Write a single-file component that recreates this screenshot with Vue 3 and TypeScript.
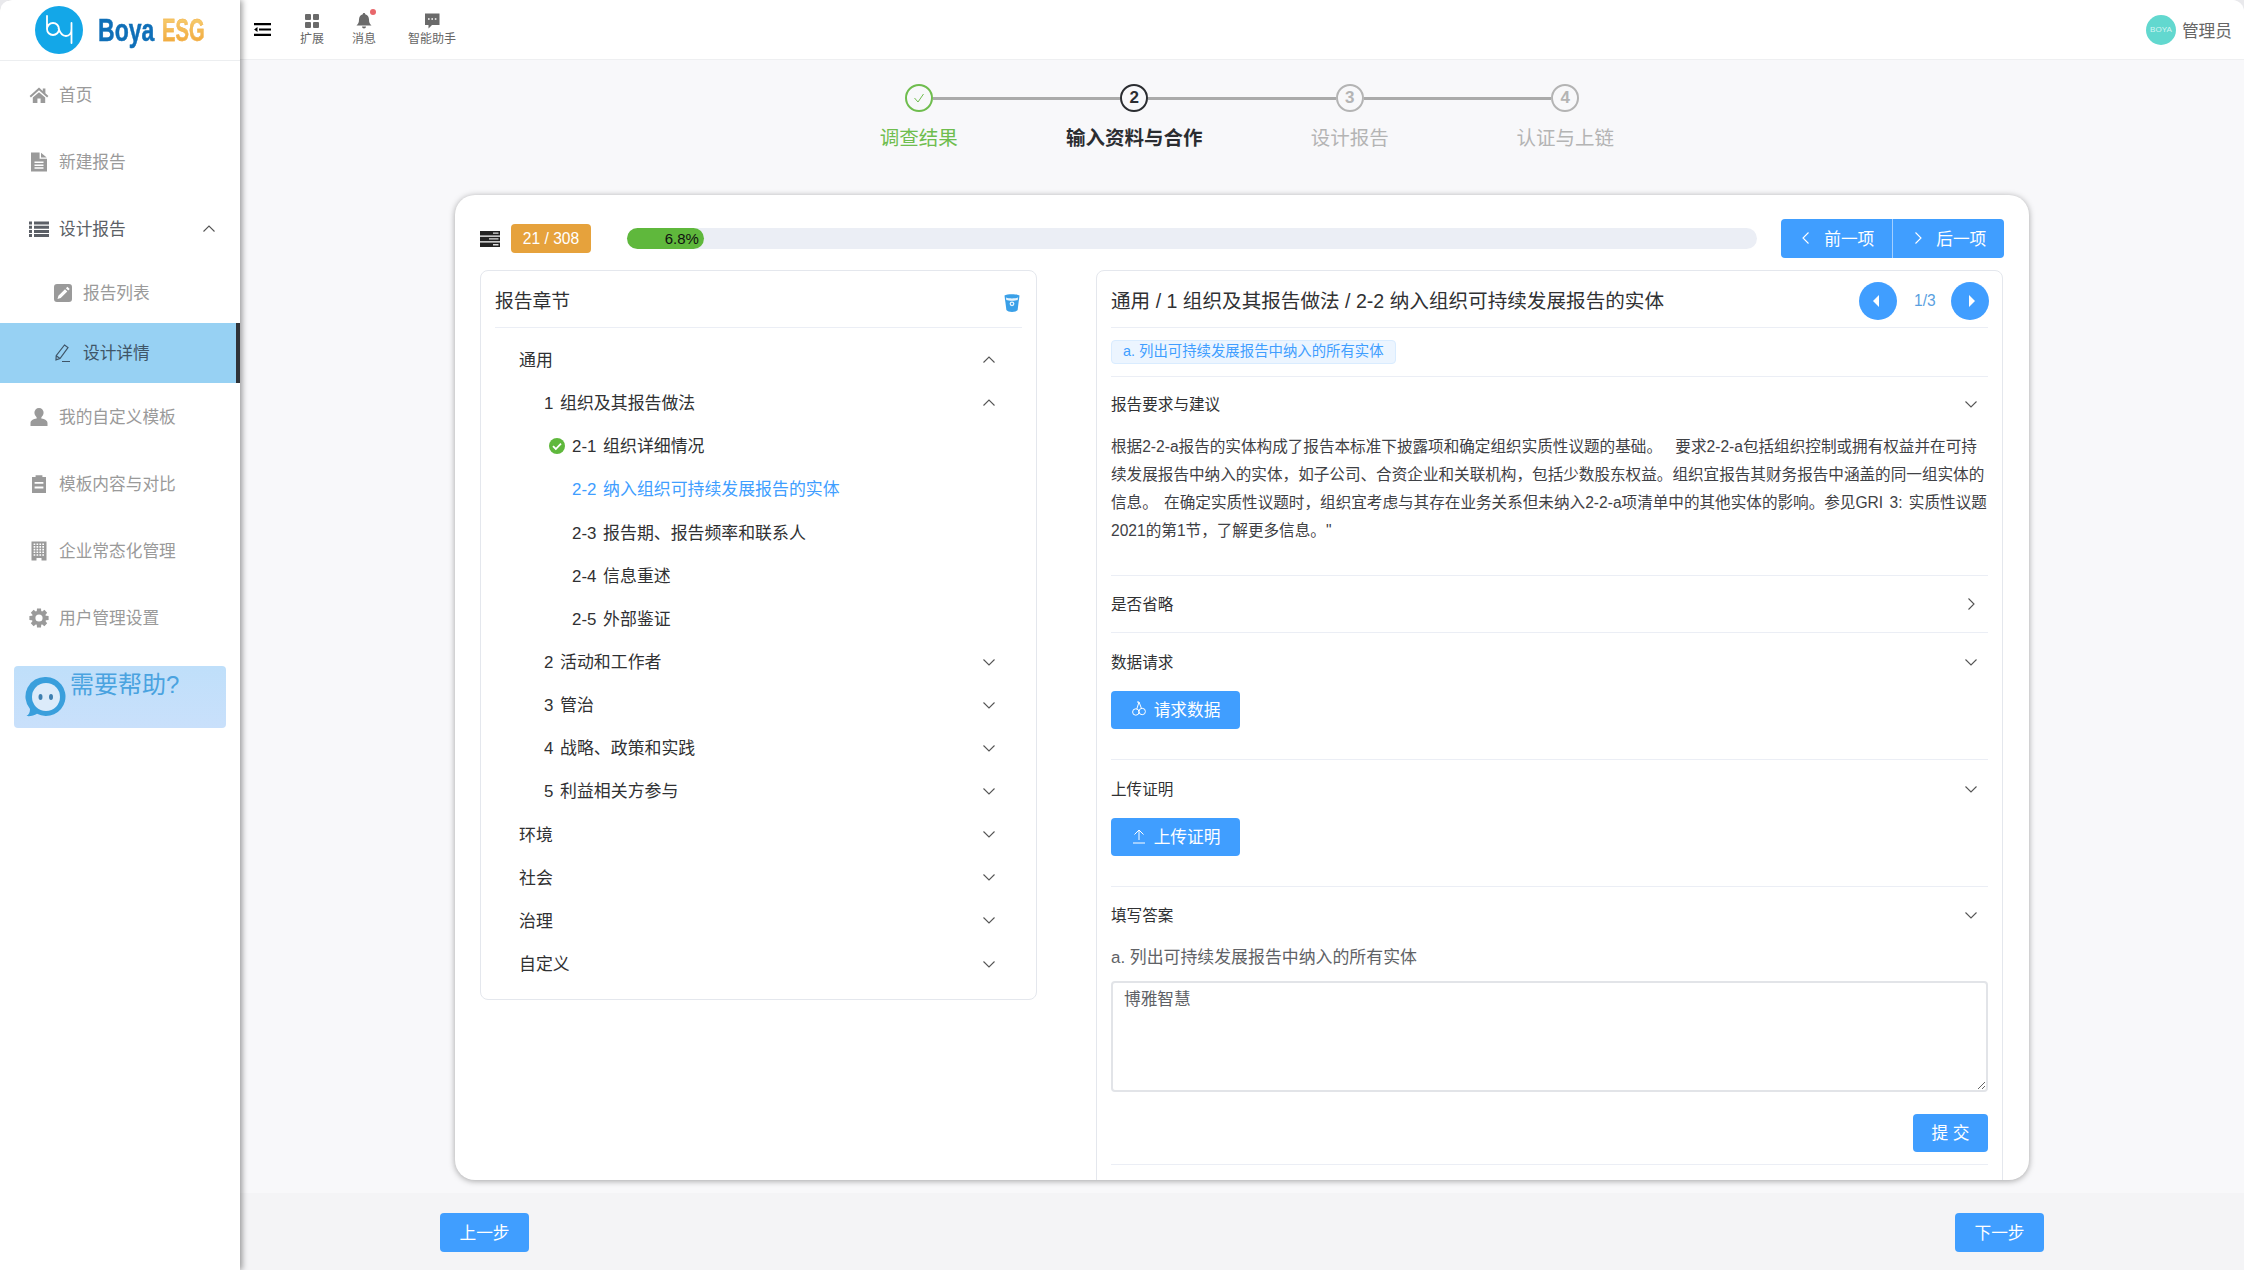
<script setup lang="ts">
import { h, ref } from 'vue'

// 细线箭头，树和折叠面板都用
const Chev = (props: { dir?: string }) =>
  h(
    'svg',
    { class: ['chev', props.dir || 'down'], viewBox: '0 0 14 14' },
    h('path', { d: 'M1.5 4.5 7 10l5.5-5.5', fill: 'none', stroke: 'currentColor', 'stroke-width': 1.1 })
  )
Chev.props = ['dir']

function gearPath() {
  const cx = 10
  const cy = 10
  let d = ''
  for (let i = 0; i < 8; i++) {
    const a = (i * Math.PI) / 4
    const pts = [
      [-2, -9.6],
      [2, -9.6],
      [2.4, -5],
      [-2.4, -5],
    ].map(([x, y]) => {
      const px = cx + x * Math.cos(a) - y * Math.sin(a)
      const py = cy + x * Math.sin(a) + y * Math.cos(a)
      return `${px.toFixed(2)} ${py.toFixed(2)}`
    })
    d += `M${pts.join('L')}Z`
  }
  return d
}

// 楼的窗格：实心方块里挖 4 列 5 行
function buildingPath() {
  let d = 'M2.5 .5h15v19h-5v-2.500h-5v2.500h-5Z'
  for (let row = 0; row < 5; row++) {
    for (let col = 0; col < 4; col++) {
      d += `M${4.6 + col * 2.9} ${2.4 + row * 2.7}h1.700v1.600h-1.700Z`
    }
  }
  return d
}

const topMenu = [
  { label: '首页', d: 'M10 2.6.6 11l1.3 1.4L10 5.3l8.1 7.1 1.3-1.4-3-2.7V3.6h-2.6v2.4ZM3.8 12.6V18h4.6v-4.4h3.2V18h4.6v-5.4L10 7.3Z' },
  { label: '新建报告', d: 'M2 .5h8.6v6.2H18V19.5H2ZM12 .8 17.7 5.4H12ZM5.5 9.6h9v1.5h-9ZM5.5 12.4h9v1.5h-9ZM5.5 15.2h9v1.5h-9Z' },
]
const lowerMenu = [
  { label: '我的自定义模板', d: 'M10 1a4.6 4.6 0 0 1 4.6 5 4.6 5.4 0 0 1-2.2 4.2l-.1 1.4c3.6.6 6.2 2 6.2 4.6v2.8H1.5v-2.8c0-2.6 2.6-4 6.2-4.6l-.1-1.4A4.6 5.4 0 0 1 5.4 6 4.6 4.6 0 0 1 10 1Z' },
  { label: '模板内容与对比', d: 'M3 3h3.6V1.2h6.8V3H17v16H3ZM5.6 8h8.8v1.8H5.6ZM5.6 12.6h8.8v1.8H5.6Z' },
  { label: '企业常态化管理', d: buildingPath() },
  { label: '用户管理设置', d: '', gear: true },
]
const gear = gearPath()

interface TreeRow {
  label: string
  level: number
  chev?: string
  done?: boolean
  active?: boolean
}
const tree: TreeRow[] = [
  { label: '通用', level: 1, chev: 'up' },
  { label: '1 组织及其报告做法', level: 2, chev: 'up' },
  { label: '2-1 组织详细情况', level: 3, done: true },
  { label: '2-2 纳入组织可持续发展报告的实体', level: 3, active: true },
  { label: '2-3 报告期、报告频率和联系人', level: 3 },
  { label: '2-4 信息重述', level: 3 },
  { label: '2-5 外部鉴证', level: 3 },
  { label: '2 活动和工作者', level: 2, chev: 'down' },
  { label: '3 管治', level: 2, chev: 'down' },
  { label: '4 战略、政策和实践', level: 2, chev: 'down' },
  { label: '5 利益相关方参与', level: 2, chev: 'down' },
  { label: '环境', level: 1, chev: 'down' },
  { label: '社会', level: 1, chev: 'down' },
  { label: '治理', level: 1, chev: 'down' },
  { label: '自定义', level: 1, chev: 'down' },
]

const steps = [
  { label: '调查结果', state: 'done' },
  { label: '输入资料与合作', state: 'current', num: 2 },
  { label: '设计报告', state: 'todo', num: 3 },
  { label: '认证与上链', state: 'todo', num: 4 },
]

// 和原页面的折行保持一致
const guidance = [
  '根据2-2-a报告的实体构成了报告本标准下披露项和确定组织实质性议题的基础。 要求2-2-a包括组织控制或拥有权益并在可持',
  '续发展报告中纳入的实体，如子公司、合资企业和关联机构，包括少数股东权益。组织宜报告其财务报告中涵盖的同一组实体的',
  '信息。 在确定实质性议题时，组织宜考虑与其存在业务关系但未纳入2-2-a项清单中的其他实体的影响。参见GRI 3: 实质性议题',
  '2021的第1节，了解更多信息。"',
]

const percent = 6.8
const answer = ref('博雅智慧')
</script>

<template>
  <div class="app">
    <aside class="sidebar">
      <div class="logo">
        <svg class="logo-mark" viewBox="0 0 48 48">
          <circle cx="24" cy="24" r="24" fill="#13a7e8" />
          <path
            d="M12 10v13a6 6 0 1 0 6-6 6 6 0 0 0-6 6M23.500 22C25 27 28 30 31 30c3.500 0 5.500-3 5.500-7v-6M36.500 23v14"
            fill="none"
            stroke="#fff"
            stroke-width="1.8"
            stroke-linecap="round"
          />
        </svg>
        <span class="logo-boya">Boya</span>
        <span class="logo-esg">ESG</span>
      </div>

      <nav class="menu">
        <a v-for="m in topMenu" :key="m.label" class="menu-item">
          <svg class="mi" viewBox="0 0 20 20"><path :d="m.d" fill-rule="evenodd" /></svg>
          <span>{{ m.label }}</span>
        </a>
        <a class="menu-item open">
          <svg class="mi" viewBox="0 0 20 20">
            <path
              d="M0 2.5h3v3H0Zm5 0h15v3H5ZM0 6.700h3v3H0Zm5 0h15v3H5ZM0 10.900h3v3H0Zm5 0h15v3H5ZM0 15.100h3v3H0Zm5 0h15v3H5Z"
            />
          </svg>
          <span>设计报告</span>
          <Chev dir="up" class="menu-chev" />
        </a>
        <a class="menu-sub">
          <svg class="mi" viewBox="0 0 20 20">
            <path
              fill-rule="evenodd"
              d="M4 1h12a3 3 0 0 1 3 3v12a3 3 0 0 1-3 3H4a3 3 0 0 1-3-3V4a3 3 0 0 1 3-3Zm10.400 2.800-1.500 1.500 2.300 2.300 1.500-1.500ZM12 6.200 5.400 12.800l-.9 3.200 3.200-.9 6.600-6.600Z"
            />
          </svg>
          <span>报告列表</span>
        </a>
        <a class="menu-sub active">
          <svg class="mi" viewBox="0 0 20 20">
            <path
              d="M11.500 2 15 4.600 7 15.500l-4 1.400.2-4.200ZM3.200 12.700l3.800 2.800M9 18.500h8"
              fill="none"
              stroke="currentColor"
              stroke-width="1.200"
            />
          </svg>
          <span>设计详情</span>
        </a>
        <a v-for="m in lowerMenu" :key="m.label" class="menu-item">
          <svg v-if="m.gear" class="mi" viewBox="0 0 20 20">
            <path :d="gear" />
            <circle cx="10" cy="10" r="5.400" fill="none" stroke="currentColor" stroke-width="3.600" />
          </svg>
          <svg v-else class="mi" viewBox="0 0 20 20"><path :d="m.d" fill-rule="evenodd" /></svg>
          <span>{{ m.label }}</span>
        </a>
      </nav>

      <div class="help">
        <svg class="help-bot" viewBox="0 0 42 42">
          <path d="M21 1a19.500 19.500 0 1 1-9 36.800C9 39.500 5.500 40.500 1.500 40c2.500-1.500 3.500-3.500 3.500-7A19.500 19.500 0 0 1 21 1Z" fill="#3a9fdc" />
          <circle cx="21" cy="21" r="14" fill="#dcebfa" />
          <ellipse cx="15.500" cy="21" rx="2" ry="3" fill="#3f7fb0" />
          <ellipse cx="26" cy="21" rx="2" ry="3" fill="#3f7fb0" />
        </svg>
        <span class="help-text">需要帮助?</span>
      </div>
    </aside>

    <div class="main">
      <header class="topbar">
        <svg class="toggle" viewBox="0 0 17 13">
          <path d="M0 0h17v2.200H0ZM5 5.400h12v2.200H5ZM0 10.800h17V13H0ZM0 6.500l3.500-2.400v4.800Z" />
        </svg>
        <div class="tb-item">
          <svg class="tb-icon" viewBox="0 0 16 16">
            <rect x="1" y="1" width="6" height="6" rx="1" />
            <rect x="9" y="1" width="6" height="6" rx="1" />
            <rect x="1" y="9" width="6" height="6" rx="1" />
            <rect x="9" y="9" width="6" height="6" rx="1" />
          </svg>
          <span>扩展</span>
        </div>
        <div class="tb-item">
          <span class="bell-wrap">
            <svg class="tb-icon" viewBox="0 0 16 16">
              <path d="M8 0c.8 0 1.200.5 1.200 1.200C11.500 1.800 13 3.800 13 6.500c0 3 .7 4.500 2.500 6H.5C2.300 11 3 9.500 3 6.500 3 3.800 4.500 1.800 6.800 1.200 6.800.5 7.200 0 8 0ZM6 13.500h4a2 2 0 0 1-4 0Z" />
            </svg>
            <i class="dot"></i>
          </span>
          <span>消息</span>
        </div>
        <div class="tb-item wide">
          <svg class="tb-icon" viewBox="0 0 16 16">
            <path
              fill-rule="evenodd"
              d="M1 .5h14.500v11.500H8L4.500 15.500V12H1ZM4 5.200v1.600h1.600V5.200Zm3.400 0v1.600H9V5.200Zm3.400 0v1.600h1.600V5.200Z"
            />
          </svg>
          <span>智能助手</span>
        </div>
        <div class="user">
          <span class="avatar">BOYA</span>
          <span class="user-name">管理员</span>
        </div>
      </header>

      <section class="stepper">
        <div v-for="(s, i) in steps" :key="s.label" class="step" :class="s.state">
          <span v-if="i < steps.length - 1" class="step-line"></span>
          <span class="step-dot">
            <svg v-if="s.state === 'done'" viewBox="0 0 14 14" class="step-check">
              <path d="M2.500 7 6 11l5.500-8" fill="none" stroke="currentColor" stroke-width="1" />
            </svg>
            <template v-else>{{ s.num }}</template>
          </span>
          <span class="step-label">{{ s.label }}</span>
        </div>
      </section>

      <section class="card">
        <div class="card-top">
          <svg class="stack-icon" viewBox="0 0 20 16">
            <path d="M0 0h20v4.400H0ZM0 5.800h20v4.400H0ZM0 11.600h20V16H0Z" fill="#222" />
            <path d="M13 1.500h5.500v1.300H13ZM9 7.300h9.500v1.300H9ZM13 13.100h5.500v1.300H13Z" fill="#ddd" />
          </svg>
          <span class="count">21 / 308</span>
          <div class="track">
            <div class="fill" :style="{ width: percent + '%' }">{{ percent }}%</div>
          </div>
          <div class="btn-group">
            <button class="btn seg"><Chev dir="left" class="seg-chev" />前一项</button>
            <button class="btn seg"><Chev dir="right" class="seg-chev" />后一项</button>
          </div>
        </div>

        <div class="columns">
          <div class="panel left-panel">
            <div class="panel-head">
              <span class="panel-title">报告章节</span>
              <svg class="bucket" viewBox="0 0 16 20">
                <path d="M.5 2.500C3 .8 13 .8 15.500 2.500L13.600 17c-1.500 2.500-9.700 2.500-11.200 0Z" fill="#3aa0e8" />
                <path d="M2 4.600c3 1.200 9 1.200 12 0l-.3 2.400c-3 1-8.400 1-11.400 0Z" fill="#e8f4fd" />
                <circle cx="8" cy="10.800" r="2.400" fill="#e8f4fd" />
                <circle cx="8" cy="10.800" r="1.100" fill="#3aa0e8" />
              </svg>
            </div>
            <ul class="tree">
              <li
                v-for="row in tree"
                :key="row.label"
                class="tree-row"
                :class="['lv' + row.level, { done: row.done, active: row.active }]"
              >
                <svg v-if="row.done" class="ok" viewBox="0 0 16 16">
                  <circle cx="8" cy="8" r="8" fill="#5fb83c" />
                  <path d="m4 8.200 2.800 2.800L12 5.600" fill="none" stroke="#fff" stroke-width="1.800" />
                </svg>
                <span class="tree-label">{{ row.label }}</span>
                <Chev v-if="row.chev" :dir="row.chev" />
              </li>
            </ul>
          </div>

          <div class="panel right-panel">
            <div class="panel-head">
              <span class="panel-title crumbs">通用 / 1 组织及其报告做法 / 2-2 纳入组织可持续发展报告的实体</span>
              <div class="pager">
                <button class="round"><i class="tri tri-l"></i></button>
                <span class="page-no">1/3</span>
                <button class="round"><i class="tri tri-r"></i></button>
              </div>
            </div>
            <div class="tag-row"><span class="tag">a. 列出可持续发展报告中纳入的所有实体</span></div>

            <div class="sec">
              <div class="sec-row short"><span>报告要求与建议</span><Chev /></div>
              <p class="sec-text">
                <span v-for="line in guidance" :key="line" class="sec-line">{{ line }}</span>
              </p>
            </div>
            <div class="sec closed">
              <div class="sec-row"><span>是否省略</span><Chev dir="right" /></div>
            </div>
            <div class="sec">
              <div class="sec-row tall"><span>数据请求</span><Chev /></div>
              <button class="btn action">
                <svg class="btn-icon" viewBox="0 0 16 16">
                  <path
                    d="M8 1 5.800 8M8 1l2.500 6.500M8 1h-2"
                    fill="none"
                    stroke="currentColor"
                    stroke-width="1"
                  />
                  <circle cx="4.800" cy="11" r="3.200" fill="none" stroke="currentColor" stroke-width="1" />
                  <circle cx="11.200" cy="10.500" r="3.200" fill="none" stroke="currentColor" stroke-width="1" />
                </svg>
                请求数据
              </button>
            </div>
            <div class="sec">
              <div class="sec-row tall"><span>上传证明</span><Chev /></div>
              <button class="btn action">
                <svg class="btn-icon" viewBox="0 0 16 16">
                  <path d="M8 12V2M3.500 6.500 8 2l4.500 4.500M2 15h12" fill="none" stroke="currentColor" stroke-width="1" />
                </svg>
                上传证明
              </button>
            </div>
            <div class="sec last">
              <div class="sec-row"><span>填写答案</span><Chev /></div>
              <label class="q-label">a. 列出可持续发展报告中纳入的所有实体</label>
              <textarea v-model="answer" class="answer"></textarea>
              <div class="submit-row"><button class="btn submit">提 交</button></div>
            </div>
          </div>
        </div>
      </section>

      <footer class="foot">
        <button class="btn step-btn">上一步</button>
        <button class="btn step-btn">下一步</button>
      </footer>
    </div>
  </div>
</template>

<style>
html,
body {
  margin: 0;
  background: #e9e9ec;
}
</style>

<style scoped>
* {
  box-sizing: border-box;
}
.app {
  display: flex;
  width: 2244px;
  height: 1270px;
  overflow: hidden;
  border-radius: 12px 12px 0 0;
  font-family: 'Liberation Sans', 'Noto Sans CJK SC', sans-serif;
  font-size: 15.6px;
  color: #303133;
  background: #f8f8fa;
}
.sidebar {
  position: relative;
  z-index: 2;
  flex: 0 0 240px;
  background: #fff;
  box-shadow: 2px 0 6px rgba(0, 0, 0, 0.4);
}
.logo {
  display: flex;
  align-items: center;
  height: 61px;
  padding-left: 35px;
  border-bottom: 1px solid #eceef0;
}
.logo-mark {
  flex: 0 0 48px;
  width: 48px;
  height: 48px;
  margin-right: 15px;
}
.logo-boya,
.logo-esg {
  display: inline-block;
  flex: none;
  font-size: 32px;
  font-weight: 700;
  line-height: 40px;
  transform-origin: left center;
  -webkit-text-stroke: 0.5px currentColor;
}
.logo-boya {
  width: 64px;
  color: #0f6fb8;
  transform: scaleX(0.72);
}
.logo-esg {
  width: 70px;
  color: #f0a73a;
  background: linear-gradient(#f8d77c, #ef9f2f);
  -webkit-background-clip: text;
  background-clip: text;
  -webkit-text-fill-color: transparent;
  -webkit-text-stroke: 0.4px #f3b04a;
  transform: scaleX(0.63);
}
.menu-item,
.menu-sub {
  display: flex;
  align-items: center;
  gap: 10px;
  font-size: 16.7px;
  color: #9a9a9a;
}
.menu-item span,
.menu-sub span {
  margin-bottom: 2px;
}
.menu-item {
  height: 67px;
  padding-left: 29px;
}
.menu-item.open {
  height: 68px;
  color: #5b5f66;
}
.menu-chev {
  margin-left: auto;
  margin-right: 24px;
  color: #666;
}
.menu-sub {
  height: 60px;
  padding-left: 53px;
}
.menu-sub.active {
  background: #97d1f3;
  border-right: 4px solid #2f3338;
  color: #3f5568;
}
.mi {
  flex: 0 0 20px;
  width: 20px;
  height: 20px;
  fill: currentColor;
}
.help {
  display: flex;
  align-items: flex-start;
  height: 62px;
  margin: 15px 14px 0;
  padding-left: 11px;
  border-radius: 4px;
  background: linear-gradient(#bfdffa, #c9e0fb);
}
.help-bot {
  width: 42px;
  height: 42px;
  margin-top: 10px;
}
.help-text {
  margin-left: 3px;
  font-size: 24px;
  line-height: 38px;
  color: #4aa3e0;
}
.main {
  display: flex;
  flex: 1;
  flex-direction: column;
  min-width: 0;
}
.topbar {
  display: flex;
  align-items: flex-start;
  flex: 0 0 60px;
  padding-left: 14px;
  border-bottom: 1px solid #eeeff1;
  background: #fff;
}
.toggle {
  width: 17px;
  height: 13px;
  margin: 23px 29px 0 0;
  fill: #000;
}
.tb-item {
  display: flex;
  flex-direction: column;
  align-items: center;
  width: 24px;
  margin-right: 28px;
  padding-top: 13px;
  font-size: 12px;
  line-height: 16px;
  color: #666;
  white-space: nowrap;
}
.tb-item.wide {
  width: 48px;
  margin-left: 4px;
}
.tb-icon {
  display: block;
  width: 16px;
  height: 16px;
  margin-bottom: 2px;
  fill: #6a6a6a;
}
.bell-wrap {
  position: relative;
  display: block;
}
.dot {
  position: absolute;
  top: -4px;
  right: -4px;
  width: 6px;
  height: 6px;
  border-radius: 50%;
  background: #e8676b;
}
.user {
  display: flex;
  align-items: center;
  gap: 6px;
  height: 59px;
  margin-left: auto;
  padding-right: 12px;
}
.avatar {
  width: 30px;
  height: 30px;
  border-radius: 50%;
  background: #62d8cf;
  color: #d5f5f2;
  font-size: 8px;
  line-height: 30px;
  text-align: center;
}
.user-name {
  font-size: 16.7px;
  color: #666;
}
.stepper {
  display: grid;
  grid-template-columns: repeat(4, 215.5px);
  justify-content: center;
  padding-top: 24px;
}
.step {
  position: relative;
  display: flex;
  flex-direction: column;
  align-items: center;
  color: #b4b4b4;
}
.step-line {
  position: absolute;
  top: 13px;
  left: calc(50% + 14px);
  width: 187.5px;
  height: 3px;
  background: #aaa;
}
.step-dot {
  display: flex;
  align-items: center;
  justify-content: center;
  width: 28px;
  height: 28px;
  border: 2.5px solid currentColor;
  border-radius: 50%;
  font-size: 17px;
  font-weight: 700;
}
.step-check {
  width: 14px;
  height: 14px;
}
.step-label {
  margin-top: 12px;
  font-size: 19.5px;
  line-height: 28px;
}
.step.done {
  color: #6fbd4e;
}
.step.current {
  color: #2b2d31;
}
.step.current .step-label {
  font-weight: 700;
}
.card {
  flex: 0 0 985px;
  margin: 43px 215px 13px;
  padding: 24px 25px 0;
  overflow: hidden;
  border-radius: 20px;
  background: #fff;
  box-shadow: 0 1px 6px rgba(0, 0, 0, 0.35);
}
.card-top {
  display: flex;
  align-items: center;
  height: 39px;
}
.stack-icon {
  width: 20px;
  height: 16px;
  margin-right: 11px;
}
.count {
  width: 80px;
  height: 29px;
  border-radius: 4px;
  background: #e6a23c;
  color: #fff;
  font-size: 15.6px;
  line-height: 29px;
  text-align: center;
}
.track {
  flex: 0 0 1130px;
  height: 21px;
  margin-left: 36px;
  border-radius: 11px;
  background: #ebeef5;
}
.fill {
  height: 21px;
  padding-right: 5px;
  border-radius: 11px;
  background: #5fb83c;
  color: #111;
  font-size: 15px;
  line-height: 21px;
  text-align: right;
}
.btn {
  padding: 0 0 2px;
  border: 0;
  border-radius: 4px;
  background: #409eff;
  color: #fff;
  font-family: inherit;
  font-size: 16.7px;
  cursor: pointer;
}
.btn-group {
  display: flex;
  margin-left: 24px;
}
.seg {
  display: flex;
  align-items: center;
  justify-content: center;
  gap: 10px;
  width: 111.5px;
  height: 39px;
}
.seg:first-child {
  border-right: 1px solid #a3cfff;
  border-radius: 4px 0 0 4px;
}
.seg:last-child {
  border-radius: 0 4px 4px 0;
}
.seg-chev {
  width: 16px;
  height: 16px;
}
.columns {
  display: grid;
  grid-template-columns: 557px 907px;
  gap: 59px;
  margin-top: 12px;
}
.panel {
  border: 1px solid #e4e7ed;
  border-radius: 8px;
  background: #fff;
}
.left-panel {
  align-self: start;
  height: 730px;
  padding: 0 14px;
}
.right-panel {
  padding: 0 14px 40px;
}
.panel-head {
  display: flex;
  align-items: center;
  justify-content: space-between;
  height: 57px;
  border-bottom: 1px solid #ebeef5;
}
.panel-title {
  font-size: 18.8px;
  color: #303133;
}
.panel-title.crumbs {
  font-size: 19.6px;
}
.bucket {
  width: 16px;
  height: 20px;
  margin-top: 8px;
  margin-right: 2px;
}
.tree {
  margin: 0;
  padding: 10px 0 0;
  list-style: none;
}
.tree-row {
  display: flex;
  align-items: center;
  justify-content: space-between;
  height: 43.15px;
  padding-right: 26px;
  font-size: 16.9px;
  color: #303133;
}
.tree-label {
  margin-bottom: 2px;
  word-spacing: 2px;
}
.lv1 {
  padding-left: 24px;
}
.lv2 {
  padding-left: 49px;
}
.lv3 {
  padding-left: 77px;
}
.tree-row.done {
  justify-content: flex-start;
  gap: 7px;
  padding-left: 54px;
}
.tree-row.active {
  color: #409eff;
}
.ok {
  width: 16px;
  height: 16px;
}
.chev {
  flex: 0 0 14px;
  width: 14px;
  height: 14px;
  color: #555;
}
.chev.up {
  transform: rotate(180deg);
}
.chev.left {
  transform: rotate(90deg);
}
.chev.right {
  transform: rotate(-90deg);
}
.seg .chev {
  flex-basis: 16px;
  color: #fff;
}
.pager {
  display: flex;
  align-items: center;
  gap: 17px;
  margin: 4px -1px 0 0;
}
.round {
  position: relative;
  width: 38px;
  height: 38px;
  padding: 0;
  border: 0;
  border-radius: 50%;
  background: #409eff;
}
.tri {
  position: absolute;
  top: 13px;
  width: 0;
  height: 0;
  border-top: 6px solid transparent;
  border-bottom: 6px solid transparent;
}
.tri-l {
  left: 14px;
  border-right: 6px solid #fff;
}
.tri-r {
  left: 18px;
  border-left: 6px solid #fff;
}
.page-no {
  width: 20px;
  color: #5a9fdf;
  font-size: 15.6px;
  text-align: center;
  white-space: nowrap;
}
.tag-row {
  height: 49px;
  padding-top: 12px;
  border-bottom: 1px solid #ebeef5;
}
.tag {
  display: inline-block;
  height: 24px;
  padding: 0 11px;
  border: 1px solid #d9ecff;
  border-radius: 4px;
  background: #ecf5ff;
  color: #409eff;
  font-size: 14.4px;
  line-height: 20px;
}
.sec {
  padding-bottom: 30px;
  border-bottom: 1px solid #ebeef5;
}
.sec.closed {
  padding-bottom: 0;
}
.sec.last {
  padding-bottom: 12px;
}
.sec-row {
  display: flex;
  align-items: center;
  justify-content: space-between;
  height: 56px;
  padding-right: 10px;
  font-size: 15.6px;
}
.sec-row span {
  margin-bottom: 3px;
}
.sec-row.short {
  height: 54px;
}
.sec-row.tall {
  height: 58px;
}
.sec-text {
  margin: 2px 0 0;
  font-size: 15.6px;
  line-height: 28px;
  word-spacing: 2px;
  color: #3f4145;
}
.sec-line {
  display: block;
  white-space: nowrap;
}
.sec-line:first-child {
  word-spacing: 9px;
}
.action {
  display: flex;
  align-items: center;
  justify-content: center;
  gap: 7px;
  width: 129px;
  height: 38px;
}
.btn-icon {
  width: 16px;
  height: 16px;
}
.q-label {
  display: block;
  height: 26px;
  margin-top: 2px;
  font-size: 16.9px;
  line-height: 26px;
  color: #606266;
}
.answer {
  display: block;
  width: 100%;
  height: 111px;
  margin-top: 10px;
  padding: 6px 11px;
  border: 2px solid #e2e4e8;
  border-radius: 4px;
  outline: 0;
  font-family: inherit;
  font-size: 16.7px;
  line-height: 22px;
  color: #606266;
}
.submit-row {
  display: flex;
  justify-content: flex-end;
  margin-top: 22px;
}
.submit {
  width: 75px;
  height: 38px;
}
.foot {
  display: flex;
  flex: 1;
  align-items: flex-start;
  justify-content: space-between;
  padding: 20px 200px 0;
  background: #f4f4f6;
}
.step-btn {
  width: 89px;
  height: 39px;
}
</style>
